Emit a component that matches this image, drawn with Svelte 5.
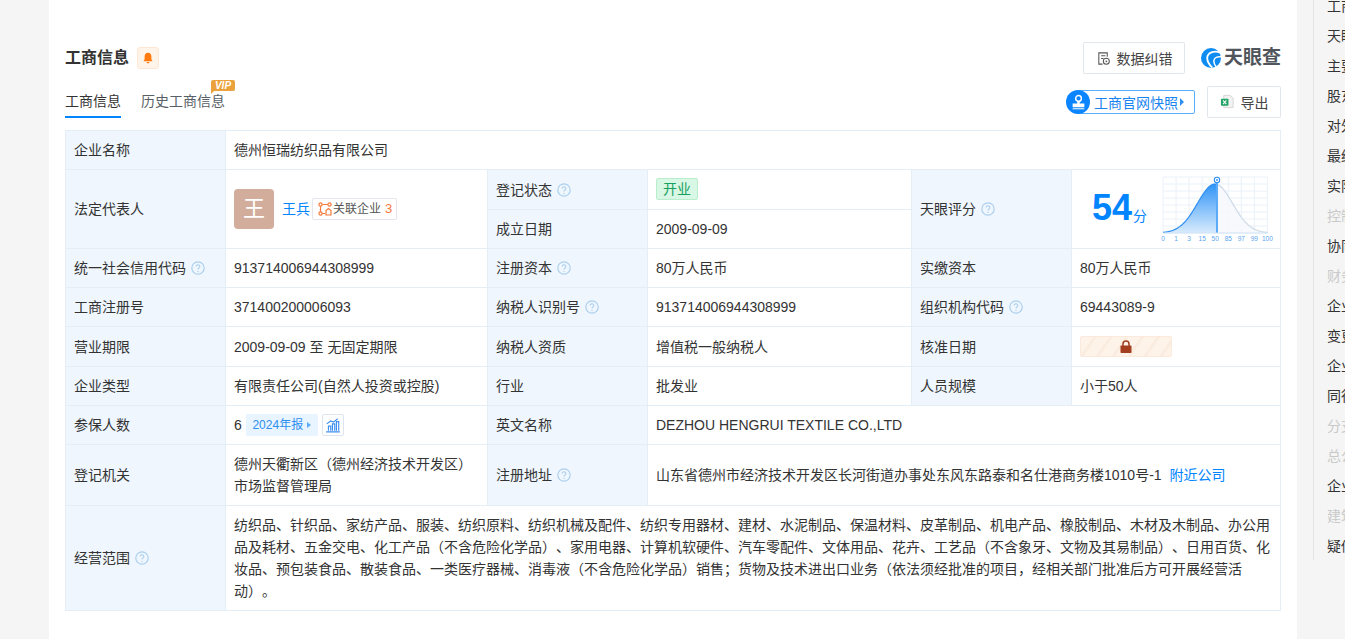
<script>
  const navItems = [
    ['工商信息', 0], ['天眼风险', 0], ['主要人员', 0], ['股东信息', 0], ['对外投资', 0],
    ['最终受益人', 0], ['实际控制人', 0], ['控制企业', 1], ['协同股东', 0], ['财务简析', 1],
    ['企业年报', 0], ['变更记录', 0], ['企业关系', 0], ['同行分析', 0], ['分支机构', 1],
    ['总公司', 1], ['企业业务', 0], ['建筑资质', 1], ['疑似关系', 0]
  ];
  const scope = '纺织品、针织品、家纺产品、服装、纺织原料、纺织机械及配件、纺织专用器材、建材、水泥制品、保温材料、皮革制品、机电产品、橡胶制品、木材及木制品、办公用品及耗材、五金交电、化工产品(不含危险化学品)、家用电器、计算机软硬件、汽车零配件、文体用品、花卉、工艺品(不含象牙、文物及其易制品)、日用百货、化妆品、预包装食品、散装食品、一类医疗器械、消毒液(不含危险化学品)销售;货物及技术进出口业务(依法须经批准的项目,经相关部门批准后方可开展经营活动)。'
    .replace(/\(/g, '（').replace(/\)/g, '）').replace(/;/g, '；').replace(/,/g, '，');

  const gx = Array.from({ length: 9 }, (_, i) => 12 + i * 13.05);
  const gy = Array.from({ length: 9 }, (_, i) => 7 + i * 7);
  const ticks = ['0', '1', '3', '15', '50', '85', '97', '99', '100'];
  const base = 63, top = 14, mean = 64, sigma = 17.5;
  const yAt = (x) => base - (base - top) * Math.exp(-((x - mean) ** 2) / (2 * sigma * sigma));
  const pts = (a, b) => {
    const out = [];
    for (let x = a; x <= b; x += 1) out.push(`${x},${yAt(x).toFixed(2)}`);
    return out.join(' L');
  };
  const leftCurve = 'M' + pts(12, 66);
  const rightCurve = 'M' + pts(66, 117);
  const leftFill = `${leftCurve} L66,${base} L12,${base} Z`;
  const rightFill = `${rightCurve} L117,${base} L66,${base} Z`;
</script>

{#snippet help()}
  <svg class="help" viewBox="0 0 14 14" width="14" height="14" aria-hidden="true">
    <circle cx="7" cy="7" r="6.2" fill="none" stroke="#add0ee" stroke-width="1.2" />
    <path d="M5.2 5.6a1.8 1.8 0 1 1 2.8 1.5c-.7.4-1 .8-1 1.5" fill="none" stroke="#add0ee" stroke-width="1.1" />
    <circle cx="7" cy="10.4" r=".7" fill="#add0ee" />
  </svg>
{/snippet}

<div class="page">
  <main class="card">
    <div class="head">
      <div class="title-wrap">
        <h2>工商信息</h2>
        <span class="bell">
          <svg viewBox="0 0 12 12" width="12" height="12" aria-hidden="true">
            <path d="M6 .8c-2.3 0-3.4 1.8-3.4 3.8v2.6L1.5 9.2h9L9.4 7.2V4.6C9.4 2.6 8.3.8 6 .8z M4.6 10h2.800a1.400 1.400 0 0 1-2.800 0z" fill="#ff7a0f" />
          </svg>
        </span>
      </div>
      <div class="head-right">
        <button class="btn btn-data">
          <svg viewBox="0 0 16 16" width="15" height="15" aria-hidden="true">
            <path d="M12 6V2H3v12h4M5.500 5H10M5.500 8H8" fill="none" stroke="#555" stroke-width="1.100" />
            <circle cx="11" cy="11" r="3.200" fill="none" stroke="#555" stroke-width="1.100" />
            <circle cx="11" cy="11" r=".9" fill="#555" />
          </svg>
          数据纠错
        </button>
        <div class="logo">
          <svg viewBox="0 0 24 24" width="20" height="20" aria-hidden="true">
            <circle cx="12" cy="12" r="12" fill="#0f8cf2" />
            <path d="M23 5.500C15 2.500 8 6 7.500 11.500c-.3 4 2 8 6 12" fill="none" stroke="#fff" stroke-width="2.200" />
            <path d="M24 10.500c-4-.5-8 1-8.500 4.500-.3 2.500.8 5.500 3 8" fill="none" stroke="#fff" stroke-width="1.800" />
          </svg>
          <span>天眼查</span>
        </div>
      </div>
    </div>

    <div class="subhead">
      <nav class="tabs">
        <span class="tab active">工商信息</span>
        <span class="tab">历史工商信息<i class="vip">VIP</i></span>
      </nav>
      <div class="head-right sub-right">
        <div class="snap">
          <span class="snap-ico">
            <svg viewBox="0 0 16 16" width="17" height="17" aria-hidden="true">
              <circle cx="8" cy="4.200" r="2.700" fill="none" stroke="#fff" stroke-width="1.400" />
              <path d="M6.800 6.500v2.500H2.500v3.500h11V9H9.200V6.500z" fill="#fff" />
              <rect x="2.500" y="13.200" width="11" height="1.300" fill="#bfe0ff" />
            </svg>
          </span>
          <span class="snap-text">工商官网快照</span>
          <i class="tri"></i>
        </div>
        <button class="btn btn-export">
          <svg viewBox="0 0 16 16" width="15" height="15" aria-hidden="true">
            <path d="M4 1.500h7l3 3v10H4z" fill="#f2f2f2" stroke="#d5d5d5" />
            <rect x="1" y="5" width="8" height="7.500" rx=".8" fill="#21a366" />
            <path d="M3.200 6.800l3.600 4M6.800 6.800l-3.600 4" stroke="#fff" stroke-width="1.100" />
          </svg>
          导出
        </button>
      </div>
    </div>

    <table>
      <colgroup>
        <col class="c1" /><col class="c2" /><col class="c3" /><col class="c4" /><col class="c5" /><col class="c6" />
      </colgroup>
      <tbody>
        <tr class="h39">
          <th>企业名称</th>
          <td colspan="5">德州恒瑞纺织品有限公司</td>
        </tr>
        <tr class="h40">
          <th rowspan="2">法定代表人</th>
          <td rowspan="2">
            <div class="person">
              <span class="avatar">王</span>
              <a class="link name">王兵</a>
              <span class="rel">
                <svg viewBox="0 0 14 14" width="14" height="14" aria-hidden="true">
                  <g fill="none" stroke="#f5793a" stroke-width="1.200">
                    <circle cx="2.500" cy="2.500" r="1.600" />
                    <circle cx="11.500" cy="2.500" r="1.600" />
                    <circle cx="2.500" cy="11.500" r="1.600" />
                    <path d="M4.200 2.500h5.600M2.500 4.200v5.600M4.200 11.500H7" />
                    <path d="M10.500 6.500l-2.500 2v4.500h5V8.500z" />
                  </g>
                </svg>
                关联企业<b>3</b>
              </span>
            </div>
          </td>
          <th>登记状态{@render help()}</th>
          <td><span class="status">开业</span></td>
          <th rowspan="2">天眼评分{@render help()}</th>
          <td rowspan="2" class="score-cell">
            <div class="score">
              <span class="num">54</span><span class="unit">分</span>
              <svg class="chart" viewBox="0 0 122 78" width="122" height="78" aria-hidden="true">
                <defs>
                  <linearGradient id="fillA" x1="0" y1="0" x2="0" y2="1">
                    <stop offset="0" stop-color="#2f94f7" />
                    <stop offset="1" stop-color="#d9ebfd" />
                  </linearGradient>
                </defs>
                {#each gx as x}<line x1={x} x2={x} y1="7" y2="63" stroke="#eaf1f8" />{/each}
                {#each gy as y}<line x1="12" x2="116.400" y1={y} y2={y} stroke="#eaf1f8" />{/each}
                <path d={rightFill} fill="#f6f8fb" fill-opacity=".85" />
                <path d={rightCurve} fill="none" stroke="#cddbe8" stroke-width="1.200" />
                <path d={leftFill} fill="url(#fillA)" />
                <path d={leftCurve} fill="none" stroke="#2f8ff0" stroke-width="1.200" />
                <line x1="66" x2="66" y1="11" y2="63" stroke="#5aaaf8" stroke-width="2" />
                <line x1="12" x2="116.400" y1="63" y2="63" stroke="#cfe3f7" />
                <circle cx="66" cy="10" r="2.700" fill="#fff" stroke="#2f8ff0" stroke-width="1.100" />
                <circle cx="66" cy="10" r=".9" fill="#2f8ff0" />
                {#each ticks as t, i}
                  <text x={gx[i]} y="71" text-anchor="middle" class="tick">{t}</text>
                {/each}
              </svg>
            </div>
          </td>
        </tr>
        <tr class="h39">
          <th>成立日期</th>
          <td>2009-09-09</td>
        </tr>
        <tr class="h39">
          <th>统一社会信用代码{@render help()}</th>
          <td>913714006944308999</td>
          <th>注册资本{@render help()}</th>
          <td>80万人民币</td>
          <th>实缴资本</th>
          <td>80万人民币</td>
        </tr>
        <tr class="h39">
          <th>工商注册号</th>
          <td>371400200006093</td>
          <th>纳税人识别号{@render help()}</th>
          <td>913714006944308999</td>
          <th>组织机构代码{@render help()}</th>
          <td>69443089-9</td>
        </tr>
        <tr class="h40">
          <th>营业期限</th>
          <td>2009-09-09 至 无固定期限</td>
          <th>纳税人资质</th>
          <td>增值税一般纳税人</td>
          <th>核准日期</th>
          <td>
            <span class="locked">
              <svg viewBox="0 0 12 13" width="12" height="13" aria-hidden="true">
                <path d="M3 6V4a3 3 0 0 1 6 0v2" fill="none" stroke="#a33f1f" stroke-width="1.500" />
                <rect x="0.500" y="5.500" width="11" height="7.500" rx=".8" fill="#a33f1f" />
              </svg>
            </span>
          </td>
        </tr>
        <tr class="h39">
          <th>企业类型</th>
          <td>有限责任公司(自然人投资或控股)</td>
          <th>行业</th>
          <td>批发业</td>
          <th>人员规模</th>
          <td>小于50人</td>
        </tr>
        <tr class="h39">
          <th>参保人数</th>
          <td>
            <div class="insured">
              <span>6</span>
              <span class="report">2024年报<i class="tri small"></i></span>
              <span class="stat">
                <svg viewBox="0 0 14 14" width="16" height="16" aria-hidden="true">
                  <path d="M1 13h12M3 12V8h2v4M6.500 12V6h2v6M10 12V4h2v8" fill="none" stroke="#3d8ff0" stroke-width="1" />
                  <path d="M1.500 6L5 3.500l2.500 1L11 1.500" fill="none" stroke="#3d8ff0" stroke-width="1" />
                </svg>
              </span>
            </div>
          </td>
          <th>英文名称</th>
          <td colspan="3">DEZHOU HENGRUI TEXTILE CO.,LTD</td>
        </tr>
        <tr class="h61">
          <th>登记机关</th>
          <td>德州天衢新区（德州经济技术开发区）<br />市场监督管理局</td>
          <th>注册地址{@render help()}</th>
          <td colspan="3">山东省德州市经济技术开发区长河街道办事处东风东路泰和名仕港商务楼1010号-1<a class="link near">附近公司</a></td>
        </tr>
        <tr class="h105">
          <th>经营范围{@render help()}</th>
          <td colspan="5" class="scope">{scope}</td>
        </tr>
      </tbody>
    </table>
  </main>

  <aside class="side">
    <ul>
      {#each navItems as [label, off]}
        <li class:off={off}>{label}</li>
      {/each}
    </ul>
  </aside>
</div>

<style>
  :global(html), :global(body) {
    margin: 0;
    overflow: hidden;
  }
  .page {
    display: flex;
    width: 1345px;
    height: 639px;
    overflow: hidden;
    background: #f5f5f5;
    font-family: "Liberation Sans", "Noto Sans CJK SC", sans-serif;
    font-size: 14px;
    color: #333;
    text-spacing-trim: space-all;
  }
  .card {
    flex: none;
    width: 1248px;
    margin-left: 49px;
    box-sizing: border-box;
    padding: 42px 16px 0;
    background: #fff;
  }
  .head, .subhead {
    display: flex;
    justify-content: space-between;
    align-items: center;
    height: 32px;
  }
  .subhead {
    margin-top: 12px;
    align-items: stretch;
  }
  .title-wrap {
    display: flex;
    align-items: center;
    gap: 8px;
  }
  h2 {
    margin: 0;
    font-size: 16px;
    font-weight: 700;
    color: #333;
    line-height: 22px;
  }
  .bell {
    display: flex;
    align-items: center;
    justify-content: center;
    width: 20px;
    height: 20px;
    border: 1px solid #ffe6d2;
    border-radius: 3px;
    background: #fff4ea;
  }
  .head-right {
    display: flex;
    align-items: center;
  }
  .btn {
    display: flex;
    align-items: center;
    justify-content: center;
    gap: 6px;
    height: 32px;
    box-sizing: border-box;
    padding: 0;
    border: 1px solid #e1e6ec;
    border-radius: 2px;
    background: #fff;
    color: #444;
    font: inherit;
  }
  .btn-data { width: 102px; }
  .btn-export { width: 74px; padding-bottom: 1px; }
  .logo {
    display: flex;
    align-items: center;
    gap: 3px;
    width: 80px;
    margin-left: 16px;
    color: #50565c;
    font-size: 19px;
    font-weight: 700;
    white-space: nowrap;
    line-height: 24px;
  }
  .tabs {
    display: flex;
    gap: 20px;
  }
  .tab {
    position: relative;
    box-sizing: border-box;
    height: 32px;
    line-height: 30px;
    color: #595f66;
  }
  .tab.active {
    color: #333;
    border-bottom: 2px solid #0084ff;
  }
  .vip {
    position: absolute;
    left: 70px;
    top: -6px;
    width: 24px;
    height: 11px;
    border-radius: 2px 2px 2px 0;
    background: #eba23c;
    color: #fff;
    font: italic 700 10px/11px "Liberation Sans", sans-serif;
    text-align: center;
  }
  .vip::after {
    content: "";
    position: absolute;
    left: 0;
    top: 11px;
    border-top: 3px solid #eba23c;
    border-right: 3px solid transparent;
  }
  .sub-right { gap: 12px; }
  .snap {
    position: relative;
    display: flex;
    align-items: center;
    width: 117px;
    height: 24px;
    margin-left: 12px;
    box-sizing: border-box;
    padding: 0 0 1px 15px;
    border: 1px solid #5aaefb;
    border-radius: 2px;
    color: #1a84f0;
    white-space: nowrap;
  }
  .snap-ico {
    position: absolute;
    left: -13px;
    top: -1px;
    display: flex;
    align-items: center;
    justify-content: center;
    width: 24px;
    height: 24px;
    border-radius: 50%;
    background: #0a84ff;
  }
  .tri {
    display: inline-block;
    margin-left: 2px;
    border-left: 4px solid #2f8ff0;
    border-top: 4px solid transparent;
    border-bottom: 4px solid transparent;
  }
  .tri.small {
    margin-left: 4px;
    border-left-color: #5aaaf8;
    border-top-width: 3.500px;
    border-bottom-width: 3.500px;
  }
  table {
    width: 1215px;
    margin-top: 12px;
    border-collapse: collapse;
    table-layout: fixed;
  }
  .c1, .c3, .c5 { width: 160px; }
  .c2 { width: 262px; }
  .c4 { width: 264px; }
  .c6 { width: 209px; }
  th, td {
    box-sizing: border-box;
    padding: 0 8px;
    border: 1px solid #e4eef6;
    font-weight: 400;
    text-align: left;
    color: #333;
    line-height: 22px;
    vertical-align: middle;
  }
  th { background: #eff6fd; }
  .h39 { height: 39px; }
  .h40 { height: 40px; }
  .h61 { height: 61px; }
  .h105 { height: 105px; }
  .help {
    margin-left: 5px;
    vertical-align: -2px;
  }
  .person {
    display: flex;
    align-items: center;
  }
  .avatar {
    flex: none;
    width: 40px;
    height: 40px;
    border-radius: 4px;
    background: #d2ad9c;
    color: #fff;
    font-size: 22px;
    line-height: 40px;
    text-align: center;
  }
  .link { color: #0084ff; }
  .name { margin-left: 8px; }
  .rel {
    display: inline-flex;
    align-items: center;
    height: 22px;
    box-sizing: border-box;
    width: 85px;
    margin-left: 2px;
    padding-left: 5px;
    border: 1px solid #e3e6ec;
    border-radius: 2px;
    color: #555;
    font-size: 12px;
    gap: 1px;
  }
  .rel b {
    margin-left: 3px;
    color: #f5793a;
    font-weight: 400;
    font-size: 13px;
  }
  .status {
    display: inline-block;
    box-sizing: border-box;
    width: 42px;
    height: 22px;
    border: 1px solid #b8edcd;
    border-radius: 2px;
    background: #d9f7e5;
    color: #16a05d;
    line-height: 20px;
    text-align: center;
    vertical-align: middle;
    position: relative;
    top: -1px;
  }
  .score-cell { padding: 0; }
  .score {
    display: flex;
    align-items: flex-end;
    height: 78px;
    padding-left: 20px;
  }
  .num {
    color: #0084ff;
    font-size: 36px;
    font-weight: 700;
    line-height: 40px;
    margin-bottom: 20px;
  }
  .unit {
    margin: 0 0 22px 1px;
    color: #0084ff;
    font-size: 14px;
    line-height: 20px;
  }
  .chart {
    flex: none;
    margin-left: 4px;
  }
  .tick {
    font-size: 6.500px;
    fill: #5aa5f0;
    font-family: "Liberation Sans", sans-serif;
  }
  .locked {
    display: flex;
    align-items: center;
    justify-content: center;
    width: 92px;
    height: 21px;
    box-sizing: border-box;
    border: 1px solid #fbeadb;
    border-radius: 2px;
    background: repeating-linear-gradient(125deg, #fdf3e9 0 10px, #faecdf 10px 13px);
  }
  .insured {
    display: flex;
    align-items: center;
  }
  .report {
    display: inline-flex;
    align-items: center;
    justify-content: center;
    width: 72px;
    height: 22px;
    margin-left: 4px;
    border-radius: 2px;
    background: #e8f4ff;
    color: #2f8ff0;
    font-size: 12px;
  }
  .stat {
    display: flex;
    align-items: center;
    justify-content: center;
    width: 22px;
    height: 22px;
    box-sizing: border-box;
    margin-left: 4px;
    border: 1px solid #dde6f0;
    border-radius: 2px;
  }
  .near { margin-left: 8px; }
  .scope { line-height: 22px; }
  .side {
    flex: 1;
    min-width: 0;
    overflow: hidden;
  }
  ul {
    list-style: none;
    height: 569px;
    margin: -9px 0 0 16px;
    padding: 0 0 0 13px;
    border-left: 1px solid #e3e3e6;
  }
  li {
    height: 30px;
    line-height: 30px;
    white-space: nowrap;
    font-size: 14px;
    color: #333;
  }
  li.off { color: #c9c9c9; }
</style>
